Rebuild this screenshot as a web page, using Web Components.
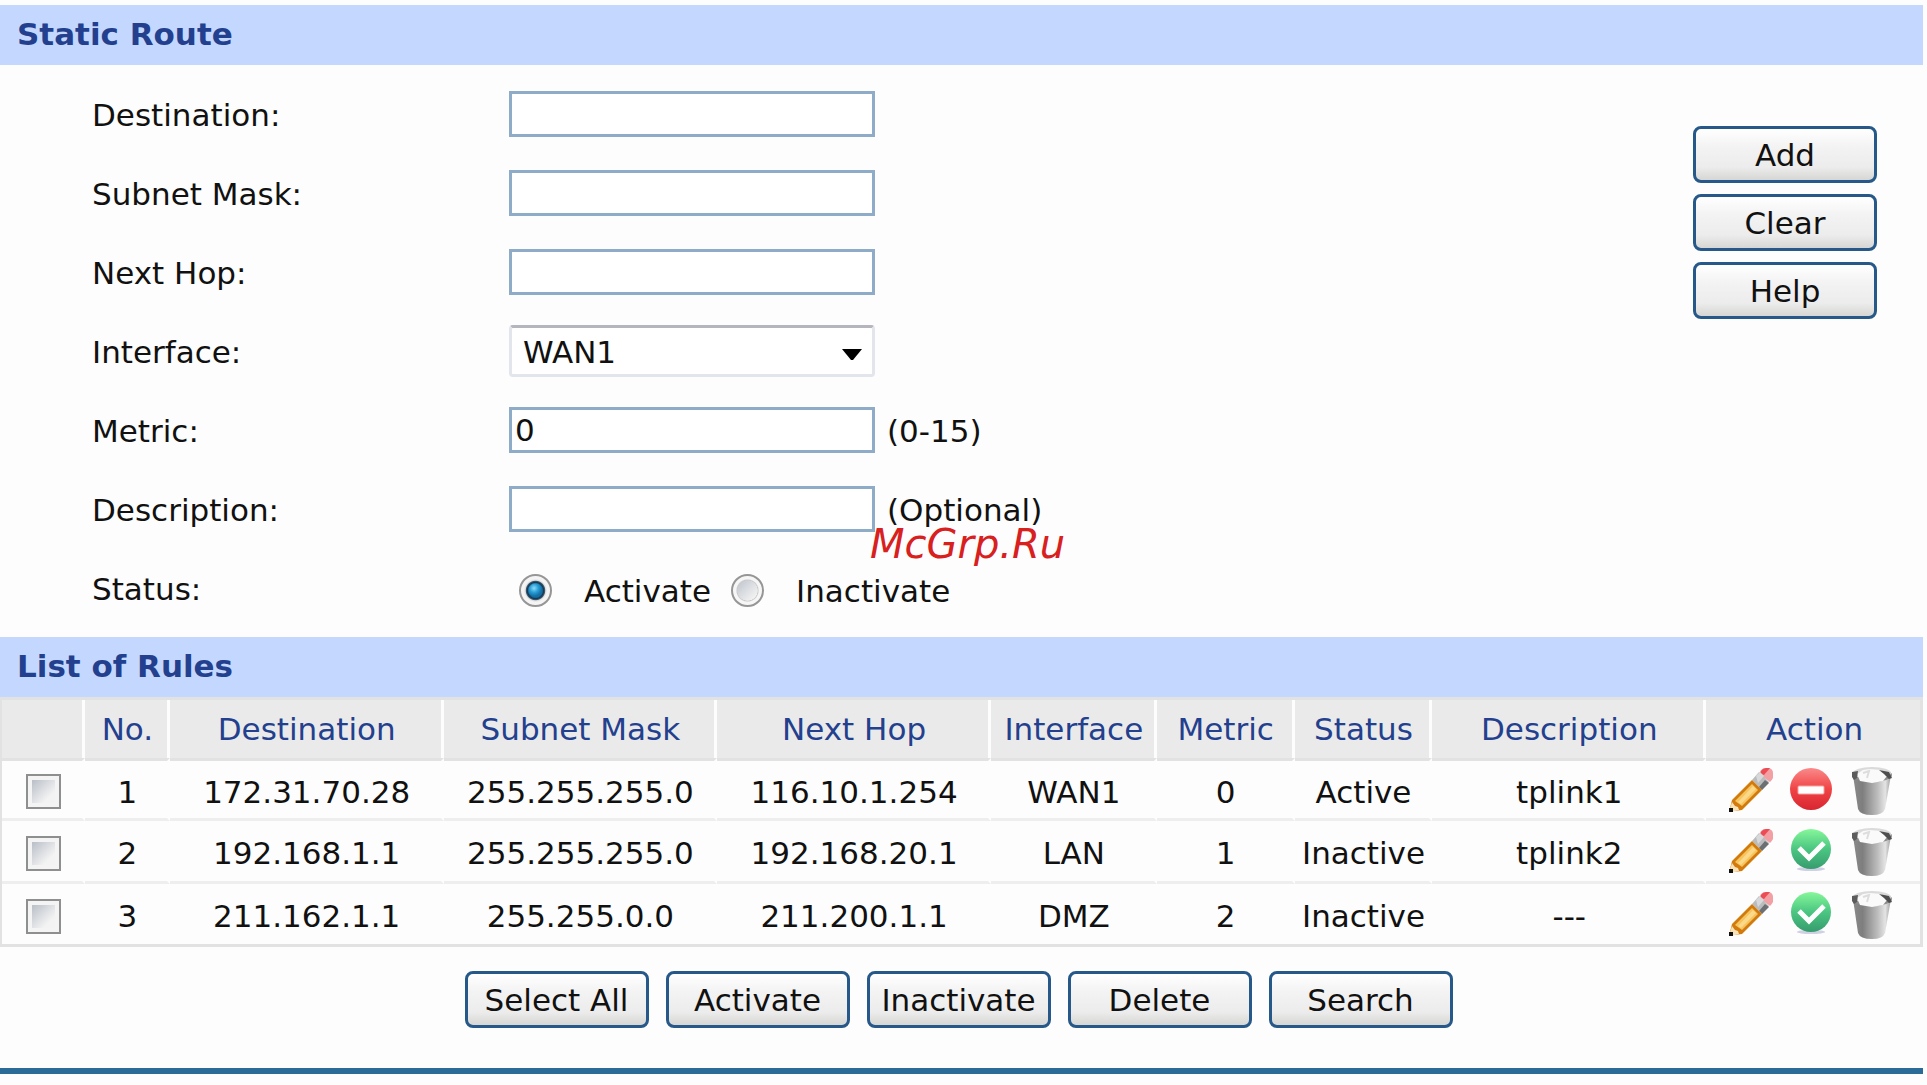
<!DOCTYPE html>
<html lang="en">
<head>
<meta charset="utf-8">
<title>Static Route</title>
<style>
  body {
    margin: 0;
    padding: 5px 4px 0 0;
    background: #fdfdfd;
    color: #111;
    font-family: "DejaVu Sans", Verdana, sans-serif;
    font-size: 31px;
    line-height: 40px;
  }
</style>
</head>
<body>
<route-page></route-page>

<script>
// Section heading bar
class TitleBar extends HTMLElement {
  constructor() {
    super();
    this.attachShadow({ mode: 'open' });
  }

  connectedCallback() {
    this.shadowRoot.innerHTML = `
      <style>
        :host {
          display: block;
          background: #c4d8ff;
          padding: 9px 17px 11px;
        }
        h2 {
          margin: 0;
          font-size: 31px;
          line-height: 40px;
          color: #23408e;
        }
      </style>
      <h2><slot></slot></h2>
    `;
  }
}

// Grey gradient button
class PushButton extends HTMLElement {
  constructor() {
    super();
    this.attachShadow({ mode: 'open' });
  }

  connectedCallback() {
    this.shadowRoot.innerHTML = `
      <style>
        :host { display: block; }
        button {
          display: block;
          box-sizing: border-box;
          width: 184px;
          height: 57px;
          padding: 0;
          border: 3px solid #26588a;
          border-radius: 8px;
          background: linear-gradient(#fff, #f3f3f3 35%, #ececec 75%, #d6d6d4);
          color: #111;
          font: inherit;
          white-space: nowrap;
        }
      </style>
      <button type="button"><slot></slot></button>
    `;
  }
}

const rowStyle = `
  :host {
    display: grid;
    grid-template-columns: 417px 1fr;
    align-items: center;
    height: 79px;
  }
  .label, .hint { padding-top: 2px; }
  .control {
    display: flex;
    align-items: center;
    gap: 12px;
  }
`;

// Label, text box and an optional hint after it
class TextField extends HTMLElement {
  constructor() {
    super();
    this.attachShadow({ mode: 'open' });
  }

  connectedCallback() {
    const label = this.getAttribute('label');
    const value = this.getAttribute('value') || '';
    const hint = this.getAttribute('hint') || '';

    this.shadowRoot.innerHTML = `
      <style>
        ${rowStyle}
        input {
          box-sizing: border-box;
          width: 366px;
          height: 46px;
          padding: 1px 3px 0;
          border: 3px solid #8eabc8;
          background: #fff;
          color: #111;
          font: inherit;
        }
      </style>
      <label class="label" for="box">${label}</label>
      <div class="control">
        <input id="box" type="text" value="${value}">
        ${hint ? `<span class="hint">${hint}</span>` : ''}
      </div>
    `;
  }
}

class SelectField extends HTMLElement {
  constructor() {
    super();
    this.attachShadow({ mode: 'open' });
  }

  connectedCallback() {
    const options = this.getAttribute('options').split(',');

    this.shadowRoot.innerHTML = `
      <style>
        ${rowStyle}
        .drop {
          display: grid;
          align-items: center;
          width: 366px;
        }
        select, svg { grid-area: 1 / 1; }
        select {
          appearance: none;
          box-sizing: border-box;
          width: 100%;
          height: 52px;
          padding: 2px 40px 0 11px;
          border: 3px solid #e3e5ec;
          border-top-color: #b5b5bd;
          border-radius: 4px;
          background: #fff;
          color: #111;
          font: inherit;
        }
        svg {
          justify-self: end;
          margin: 8px 13px 0 0;
          pointer-events: none;
        }
      </style>
      <label class="label" for="list">${this.getAttribute('label')}</label>
      <div class="control">
        <div class="drop">
          <select id="list">${options.map(o => `<option>${o}</option>`).join('')}</select>
          <svg width="20" height="11" viewBox="0 0 20 11"><path d="M0 0H20L11 11H9Z" fill="#000"/></svg>
        </div>
      </div>
    `;
  }
}

class StatusField extends HTMLElement {
  constructor() {
    super();
    this.attachShadow({ mode: 'open' });
  }

  connectedCallback() {
    this.shadowRoot.innerHTML = `
      <style>
        ${rowStyle}
        .control {
          gap: 20px;
          padding: 6px 0 0 10px;
        }
        .control label {
          display: flex;
          align-items: center;
          gap: 32px;
        }
        input {
          appearance: none;
          box-sizing: border-box;
          width: 33px;
          height: 33px;
          margin: 0;
          border: 2px solid #969696;
          border-radius: 50%;
          background: radial-gradient(circle closest-side at center, transparent 68%, #c9c9c9 72%, #f6f6f6 80%), linear-gradient(135deg, #c3c8d0 20%, #f2f2f2 75%);
        }
        input:checked {
          background: radial-gradient(circle closest-side at center, transparent 46%, #17364f 56%, #3d5a70 64%, #dcdcdc 70%, #f4f4f4 80%), radial-gradient(circle at 45% 42%, #8fdcf8 0, #2aa0d8 18%, #1270a6 34%);
        }
      </style>
      <span class="label" id="cap">${this.getAttribute('label')}</span>
      <div class="control" role="radiogroup" aria-labelledby="cap">
        <label><input type="radio" name="status" checked>Activate</label>
        <label><input type="radio" name="status">Inactivate</label>
      </div>
    `;
  }
}

const icons = {
  edit: `
    <path d="M36 4Q38 2 41 2H44Q48 3 48 7V12Q47 14 45 16L34 8Z" fill="#f3a0a4"/>
    <path d="M36 5Q38 2 41 2H45L39 9L35 8Z" fill="#ec4d55"/>
    <path d="M34 6L44 16L37 24L27 14Z" fill="#b9bbbd"/>
    <path d="M31 10L35 6L39 10L33 17Z" fill="#d6d8da"/>
    <path d="M40 14L44 17L37 24L34 21Z" fill="#6c7072"/>
    <path d="M27 14L37 24L17 44L9 45L5 42L7 34Z" fill="#d27a0c"/>
    <path d="M27 18L33 24L17 40L10 35Z" fill="#f6c35c"/>
    <path d="M28 20L31 23L16 38L13 36Z" fill="#fbd98a"/>
    <path d="M7 36L10 40L13 41L14 44L6 46L4 45Z" fill="#f8e2b8"/>
    <rect x="4" y="42" width="4" height="4" fill="#111"/>`,
  stop: `
    <linearGradient id="r" x2="0" y2="1"><stop offset="0" stop-color="#fb8a8a"/><stop offset=".5" stop-color="#f04446"/><stop offset="1" stop-color="#d82630"/></linearGradient>
    <circle cx="26" cy="23" r="21" fill="url(#r)"/>
    <rect x="13" y="20" width="26" height="8" rx="1" fill="#fff" stroke="#f5a0a0"/>`,
  start: `
    <linearGradient id="g" x2="0" y2="1"><stop offset="0" stop-color="#86f79a"/><stop offset=".5" stop-color="#4bc681"/><stop offset="1" stop-color="#379c6e"/></linearGradient>
    <ellipse cx="26" cy="42" rx="14" ry="2" fill="#cfd0e4"/>
    <circle cx="26" cy="22" r="20" fill="url(#g)"/>
    <path d="M14 21L24 31L39 16" fill="none" stroke="#fff" stroke-width="5"/>`,
  remove: `
    <linearGradient id="t"><stop offset="0" stop-color="#8a8a8a"/><stop offset=".25" stop-color="#7e7e7e"/><stop offset=".65" stop-color="#bdbdbd"/><stop offset=".85" stop-color="#e4e4e4"/><stop offset="1" stop-color="#9a9a9a"/></linearGradient>
    <path d="M8 9L13 43Q15 49 27 49Q38 49 40 43L46 9Z" fill="url(#t)"/>
    <ellipse cx="27" cy="9" rx="20" ry="7" fill="#8c8c8c"/>
    <ellipse cx="27" cy="7" rx="19" ry="6" fill="#dadada"/>
    <path d="M12 8L18 4L25 3L36 4L42 10L38 15L27 17L15 15Z" fill="#fafafa"/>
    <path d="M34 4L44 6L47 12L44 13L39 8Z" fill="#4e4e4e"/>
    <path d="M7 6L13 5L12 12L9 14L7 11Z" fill="#5c5c5c"/>
    <path d="M18 7L24 5L22 12" fill="none" stroke="#ddd" stroke-width="2"/>`
};

class IconButton extends HTMLElement {
  constructor() {
    super();
    this.attachShadow({ mode: 'open' });
  }

  connectedCallback() {
    const name = this.getAttribute('name');

    this.shadowRoot.innerHTML = `
      <style>
        :host { display: block; }
        button {
          display: block;
          padding: 0;
          border: 0;
          background: none;
        }
        svg { display: block; }
      </style>
      <button type="button" aria-label="${name}">
        <svg width="60" height="52" viewBox="0 0 60 52">${icons[name]}</svg>
      </button>
    `;
  }
}

const rules = [
  ['1', '172.31.70.28', '255.255.255.0', '116.10.1.254', 'WAN1', '0', 'Active', 'tplink1'],
  ['2', '192.168.1.1', '255.255.255.0', '192.168.20.1', 'LAN', '1', 'Inactive', 'tplink2'],
  ['3', '211.162.1.1', '255.255.0.0', '211.200.1.1', 'DMZ', '2', 'Inactive', '---']
];

class RulesTable extends HTMLElement {
  constructor() {
    super();
    this.attachShadow({ mode: 'open' });
  }

  connectedCallback() {
    const heads = ['', 'No.', 'Destination', 'Subnet Mask', 'Next Hop', 'Interface', 'Metric', 'Status', 'Description', 'Action'];
    const widths = [83, 85, 274, 274, 274, 166, 138, 138, 274, 214]; // shared out over the full width

    const rows = rules.map(rule => `
      <tr>
        <td><input type="checkbox" aria-label="Rule ${rule[0]}"></td>
        ${rule.map(cell => `<td>${cell}</td>`).join('')}
        <td>
          <div class="actions">
            <icon-button name="edit"></icon-button>
            <icon-button name="${rule[6] === 'Active' ? 'stop' : 'start'}"></icon-button>
            <icon-button name="remove"></icon-button>
          </div>
        </td>
      </tr>`).join('');

    this.shadowRoot.innerHTML = `
      <style>
        :host { display: block; }
        table {
          box-sizing: border-box;
          width: 100%;
          table-layout: fixed;
          border: 3px solid #e2e2e2;
          border-left-width: 2px;
          border-spacing: 0;
        }
        th, td {
          box-sizing: border-box;
          height: 63px;
          padding: 4px 0 0 3px;
          border-right: 3px solid #fdfdfd;
          text-align: center;
          vertical-align: middle;
          white-space: nowrap;
        }
        th {
          height: 58px;
          padding-top: 0;
          background: #eaeaea;
          color: #23408e;
          font-weight: normal;
        }
        td { border-bottom: 3px solid #eee; }
        tr:first-child td { border-top: 3px solid #e2e2e2; }
        tr:last-child td {
          height: 60px;
          border-bottom: 0;
        }
        th:last-child, td:last-child { border-right: 0; }
        input {
          appearance: none;
          display: block;
          box-sizing: border-box;
          width: 35px;
          height: 35px;
          margin: 0 auto;
          padding: 4px;
          border: 2px solid #8e8f8f;
          background: linear-gradient(135deg, #b9bfc8, #f3f3f3 75%) content-box, #f4f4f4;
        }
        .actions {
          display: flex;
          justify-content: center;
        }
      </style>
      <table>
        <colgroup>${widths.map(w => `<col style="width:${w / 19.2}%">`).join('')}</colgroup>
        <thead><tr>${heads.map(h => `<th>${h}</th>`).join('')}</tr></thead>
        <tbody>${rows}</tbody>
      </table>
    `;
  }
}

class RoutePage extends HTMLElement {
  constructor() {
    super();
    this.attachShadow({ mode: 'open' });
  }

  connectedCallback() {
    this.shadowRoot.innerHTML = `
      <style>
        :host { display: block; }
        .panel {
          position: relative;
          display: flex;
          align-items: flex-start;
          padding: 9px 46px 10px 92px;
        }
        .fields { flex: 1; }
        .side {
          display: flex;
          flex-direction: column;
          gap: 11px;
          padding-top: 52px;
        }
        /* site stamp lying over the form */
        .stamp {
          position: absolute;
          left: 870px;
          top: 459px;
          color: #d8201f;
          font-size: 40px;
          font-style: italic;
        }
        .bar {
          display: flex;
          justify-content: center;
          gap: 17px;
          padding: 24px 6px 40px 0;
          border-bottom: 6px solid #2b6b97;
        }
      </style>
      <title-bar>Static Route</title-bar>
      <div class="panel">
        <div class="fields">
          <text-field label="Destination:"></text-field>
          <text-field label="Subnet Mask:"></text-field>
          <text-field label="Next Hop:"></text-field>
          <select-field label="Interface:" options="WAN1,LAN,DMZ"></select-field>
          <text-field label="Metric:" value="0" hint="(0-15)"></text-field>
          <text-field label="Description:" hint="(Optional)"></text-field>
          <status-field label="Status:"></status-field>
        </div>
        <div class="side">
          <push-button>Add</push-button>
          <push-button>Clear</push-button>
          <push-button>Help</push-button>
        </div>
        <span class="stamp">McGrp.Ru</span>
      </div>
      <title-bar>List of Rules</title-bar>
      <rules-table></rules-table>
      <div class="bar">
        <push-button>Select All</push-button>
        <push-button>Activate</push-button>
        <push-button>Inactivate</push-button>
        <push-button>Delete</push-button>
        <push-button>Search</push-button>
      </div>
    `;
  }
}

customElements.define('title-bar', TitleBar);
customElements.define('push-button', PushButton);
customElements.define('text-field', TextField);
customElements.define('select-field', SelectField);
customElements.define('status-field', StatusField);
customElements.define('icon-button', IconButton);
customElements.define('rules-table', RulesTable);
customElements.define('route-page', RoutePage);
</script>
</body>
</html>
